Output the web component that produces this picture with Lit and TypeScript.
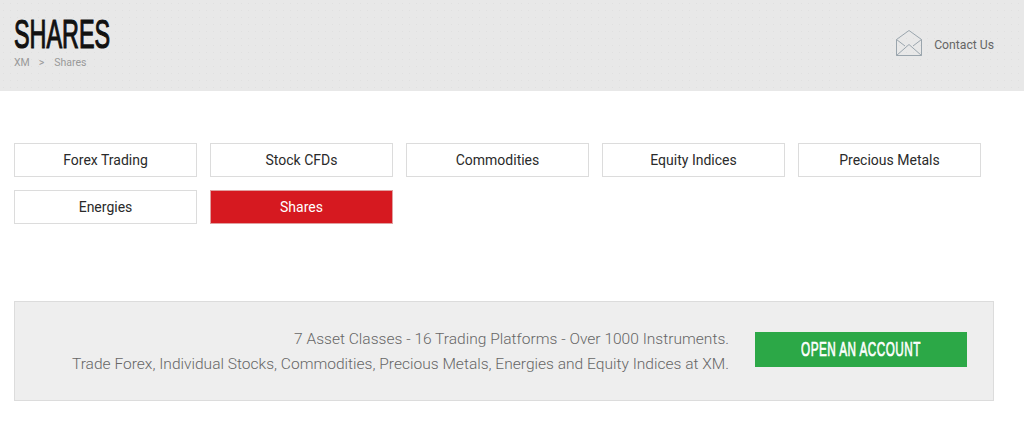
import { LitElement, html, css } from "lit";
import { customElement } from "lit/decorators.js";

const TABS = ["Forex Trading", "Stock CFDs", "Commodities", "Equity Indices", "Precious Metals", "Energies", "Shares"];

@customElement("app-root")
export class AppRoot extends LitElement {
  static styles = css`
    :host { display: block; width: 1024px; height: 445px; background: #fff; overflow: hidden; font-family: Roboto, "Liberation Sans", sans-serif; }
    .header {
      box-sizing: border-box; height: 91px; padding: 0 30px 0 14px;
      display: flex; justify-content: space-between; align-items: flex-start;
      background-color: #e8e8e8;
      background-image: radial-gradient(#e0e0e0 0.7px, transparent 0.9px);
      background-size: 7px 7px;
    }
    .title {
      font-family: "Liberation Sans", sans-serif; font-weight: 400;
      font-size: 41px; line-height: 40px; color: #111; margin-top: 14px;
      -webkit-text-stroke: 1.2px #111;
      transform: scaleX(0.57); transform-origin: left center; white-space: nowrap;
    }
    .crumbs { display: flex; align-items: center; gap: 10px; font-size: 10.5px; line-height: 14px; color: #999; margin-top: 2px; }
    .crumbs .first { margin-right: -1px; }
    .contact { display: flex; align-items: center; gap: 12px; margin-top: 30px; font-size: 12.2px; color: #666; }
    .contact span { padding-top: 3px; }
    .contact svg { display: block; }
    .tabs {
      display: grid; grid-template-columns: repeat(5, 183px); grid-auto-rows: 34px; gap: 13px;
      padding: 52px 0 0 14px;
    }
    .tab {
      box-sizing: border-box; display: flex; align-items: center; justify-content: center;
      border: 1px solid #dcdcdc; background: #fff; color: #2a2a2a; font-size: 14px;
    }
    .tab.active { background: #d61920; border-color: #e0a0a0; color: #fff; }
    .banner {
      box-sizing: border-box; margin: 77px 30px 0 14px; height: 100px;
      border: 1px solid #dcdcdc; background: #eeeeee;
      display: flex; align-items: center; justify-content: flex-end; gap: 26px; padding: 0 26px 0 0;
    }
    .copy { text-align: right; font-size: 15.55px; line-height: 25px; font-weight: 300; color: #666; padding-top: 2px; }
    .cta {
      box-sizing: border-box; width: 212px; height: 35px; background: #2ca847; color: #fff;
      display: flex; align-items: center; justify-content: center; margin-top: -3px;
    }
    .cta span {
      font-family: "Liberation Sans", sans-serif; font-weight: 400;
      font-size: 21px; line-height: 33px; margin-bottom: 2px; white-space: nowrap; letter-spacing: 0.8px;
      -webkit-text-stroke: 0.7px #fff; transform: scaleX(0.56);
    }
  `;

  render() {
    return html`
      <div class="header">
        <div>
          <div class="title">SHARES</div>
          <div class="crumbs"><span class="first">XM</span><span>&gt;</span><span>Shares</span></div>
        </div>
        <div class="contact">
          <svg width="26" height="26" viewBox="0 0 26 26" fill="none" stroke="#9aa5ad" stroke-width="1">
            <path d="M.5 9.5 13 .5 25.5 9.5V25.5H.5Z" />
            <path d="M.5 9.5 9 16M25.5 9.5 17 16M.5 25.5 13 14.5 25.5 25.5" />
          </svg>
          <span>Contact Us</span>
        </div>
      </div>
      <div class="tabs">
        ${TABS.map((t) => html`<div class="tab ${t === "Shares" ? "active" : ""}">${t}</div>`)}
      </div>
      <div class="banner">
        <div class="copy">
          <div>7 Asset Classes - 16 Trading Platforms - Over 1000 Instruments.</div>
          <div>Trade Forex, Individual Stocks, Commodities, Precious Metals, Energies and Equity Indices at XM.</div>
        </div>
        <div class="cta"><span>OPEN AN ACCOUNT</span></div>
      </div>
    `;
  }
}
